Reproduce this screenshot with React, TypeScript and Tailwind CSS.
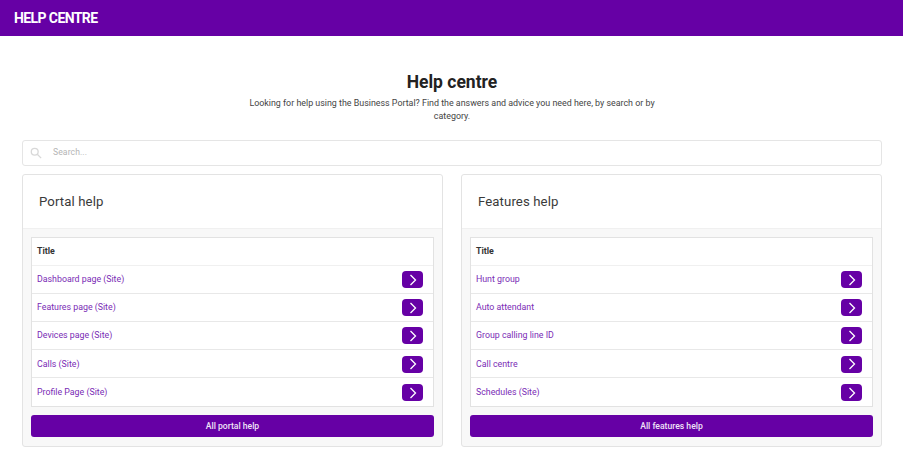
import React from 'react';

interface HelpCardProps {
  heading: string;
  items: string[];
  action: string;
}

function Chevron() {
  return (
    <svg viewBox="0 0 12 12" className="h-[12px] w-[12px]" fill="none" stroke="currentColor" strokeWidth={1.3}>
      <path d="M3.5 1 L8.5 6 L3.5 11" />
    </svg>
  );
}

function HelpCard({ heading, items, action }: HelpCardProps) {
  return (
    <section className="flex h-[273px] flex-1 flex-col rounded-[3px] border border-[#e3e3e3] bg-[#f8f8f8]">
      <div className="flex h-[54px] items-center rounded-t-[3px] border-b border-[#f0f0f0] bg-white pl-[16px] pt-[2px] text-[13.2px] tracking-[0.1px] text-[#3a3a3a]">
        {heading}
      </div>
      <div className="px-[8px] pt-[8px]">
        <div className="border border-[#e2e2e2] bg-white">
          <div className="flex h-[28px] items-center border-b border-[#f0f0f0] pl-[5px] pt-[2px] text-[8.8px] font-bold text-[#333333]">
            Title
          </div>
          {items.map((item, i) => (
            <div
              key={item}
              className={`flex h-[28.2px] items-center justify-between pl-[5px] pr-[10px] ${
                i < items.length - 1 ? 'border-b border-[#e8e8e8]' : ''
              }`}
            >
              <span className="pt-[1px] text-[8.8px] text-[#7a2bb5]">{item}</span>
              <button className="mt-[1px] flex h-[17px] w-[21px] items-center justify-center rounded-[4px] bg-[#6600a5] text-white">
                <Chevron />
              </button>
            </div>
          ))}
        </div>
        <button className="mt-[8px] h-[22px] w-full rounded-[3px] bg-[#6600a5] text-[8.6px] font-medium text-[#f0e4f7]">
          {action}
        </button>
      </div>
    </section>
  );
}

export default function App() {
  return (
    <div className="h-[468px] w-[903px] overflow-hidden bg-white font-['Roboto',sans-serif]">
      <header className="flex h-[36px] items-center bg-[#6600a5] pl-[14px] text-[14px] font-bold tracking-[-0.6px] text-white">
        HELP CENTRE
      </header>
      <div className="pl-[22px] pr-[21px]">
        <div className="pt-[33.5px] text-center">
          <h1 className="text-[17.5px] font-bold leading-[24px] text-[#222222]">Help centre</h1>
          <p className="mx-auto mt-[3px] w-[430px] text-[8.9px] leading-[13px] text-[#444444]">
            Looking for help using the Business Portal? Find the answers and advice you need here, by search or by category.
          </p>
        </div>
        <div className="mt-[17px] flex h-[26px] items-center rounded-[3px] border border-[#e5e5e5] bg-white pl-[7px]">
          <svg viewBox="0 0 14 14" className="h-[12px] w-[12px]" fill="none" stroke="#d8d8d8" strokeWidth={1.5}>
            <circle cx="5.5" cy="5.5" r="4" />
            <path d="M8.5 8.5 L13 13" />
          </svg>
          <span className="ml-[11px] text-[8.6px] tracking-[0.1px] text-[#b5b5b5]">Search...</span>
        </div>
        <div className="mt-[8px] flex gap-[18px]">
          <HelpCard
            heading="Portal help"
            items={['Dashboard page (Site)', 'Features page (Site)', 'Devices page (Site)', 'Calls (Site)', 'Profile Page (Site)']}
            action="All portal help"
          />
          <HelpCard
            heading="Features help"
            items={['Hunt group', 'Auto attendant', 'Group calling line ID', 'Call centre', 'Schedules (Site)']}
            action="All features help"
          />
        </div>
      </div>
    </div>
  );
}
